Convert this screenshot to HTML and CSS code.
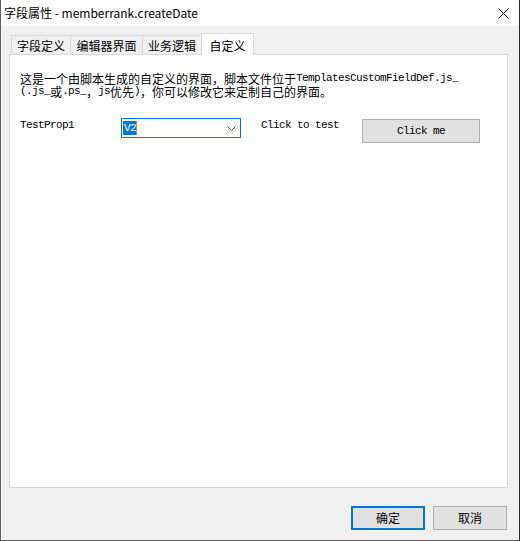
FILE: index.html
```html
<!DOCTYPE html>
<html>
<head>
<meta charset="utf-8">
<link rel="stylesheet" href="styles.css">
</head>
<body>
<div class="window">
  <div class="titlebar">
    <span class="title">字段属性 - memberrank.createDate</span>
    <svg class="close" width="11" height="11" viewBox="0 0 11 11"><path d="M0.5 0.5 L10.5 10.5 M10.5 0.5 L0.5 10.5" stroke="#000" stroke-width="1" fill="none"/></svg>
  </div>
  <div class="client">
    <div class="tabs">
      <div class="tab t1">字段定义</div>
      <div class="tab t2">编辑器界面</div>
      <div class="tab t3">业务逻辑</div>
      <div class="tab active">自定义</div>
    </div>
    <div class="panel">
      <div class="desc">
        <div class="line">这是一个由脚本生成的自定义的界面，脚本文件位于<span class="lat">TemplatesCustomFieldDef.js_</span></div>
        <div class="line"><span class="lat">(.js_</span>或<span class="lat">.ps_</span>，<span class="lat">js</span>优先<span class="lat">)</span>，你可以修改它来定制自己的界面。</div>
      </div>
      <div class="row">
        <span class="label lat">TestProp1</span>
        <div class="combo">
          <span class="sel lat">V2</span>
          <svg class="chev" width="9" height="5" viewBox="0 0 9 5"><path d="M0.5 0.5 L4.5 4.5 L8.5 0.5" stroke="#555" stroke-width="1" fill="none"/></svg>
        </div>
        <span class="label2 lat">Click to test</span>
        <div class="btn-click lat">Click me</div>
      </div>
    </div>
    <div class="footer">
      <div class="btn default">确定</div>
      <div class="btn">取消</div>
    </div>
  </div>
</div>
</body>
</html>
```
FILE: styles.css
```css
html, body {
  margin: 0;
  padding: 0;
  background: #f0f0f0;
}
.window {
  width: 520px;
  height: 541px;
  box-sizing: border-box;
  border-left: 1px solid #5d6366;
  border-right: 1px solid #2a2a2a;
  border-bottom: 1px solid #5d6366;
  background: #f0f0f0;
  display: flex;
  flex-direction: column;
  font-family: "Noto Sans CJK SC", "Liberation Sans", sans-serif;
  font-size: 12px;
  color: #000;
}
.titlebar {
  height: 26px;
  background: #fff;
  display: flex;
  align-items: center;
  justify-content: space-between;
  padding: 0 10px 0 3px;
}
.title {
  font-family: "Noto Sans CJK SC", sans-serif;
  font-size: 12px;
  line-height: 16px;
}
.close {
  display: block;
  margin-top: 1px;
}
.client {
  flex: 1;
  padding: 7px 0 0 8px;
  display: flex;
  flex-direction: column;
}
.tabs {
  display: flex;
  align-items: flex-end;
  padding-left: 2px;
}
.tab {
  box-sizing: border-box;
  height: 19px;
  border: 1px solid #d9d9d9;
  border-bottom: none;
  background: #f0f0f0;
  line-height: 19px;
  text-align: center;
  margin-left: -1px;
}
.tabs .t1 { margin-left: 0; width: 60px; }
.t2 { width: 73px; }
.t3 { width: 60px; }
.tab.active {
  width: 53px;
  height: 22px;
  line-height: 24px;
  background: #fff;
  margin-bottom: -1px;
  position: relative;
  z-index: 1;
}
.panel {
  width: 499px;
  height: 434px;
  box-sizing: border-box;
  background: #fff;
  border: 1px solid #d9d9d9;
  padding: 17px 10px 0 10px;
}
.desc {
  display: flex;
  flex-direction: column;
}
.line {
  height: 13px;
  line-height: 13px;
  white-space: nowrap;
  display: flex;
  align-items: center;
}
.lat {
  font-family: "Liberation Mono", monospace;
  font-size: 11px;
  letter-spacing: -0.6px;
}
.row {
  display: flex;
  align-items: flex-start;
  margin-top: 20px;
}
.label {
  width: 101px;
  height: 14px;
  line-height: 14px;
}
.combo {
  width: 120px;
  height: 20px;
  box-sizing: border-box;
  border: 1px solid #0078d7;
  display: flex;
  align-items: center;
  justify-content: space-between;
  padding: 0 4px 0 1px;
}
.sel {
  background: #0078d7;
  color: #fff;
  height: 14px;
  line-height: 14px;
  padding-left: 1px;
  border-right: 1px solid #e8841f;
}
.chev {
  display: block;
}
.label2 {
  margin-left: 20px;
  width: 101px;
  height: 14px;
  line-height: 14px;
}
.btn-click {
  width: 118px;
  height: 24px;
  box-sizing: border-box;
  margin-top: 1px;
  background: #e1e1e1;
  border: 1px solid #adadad;
  text-align: center;
  line-height: 22px;
}
.footer {
  display: flex;
  justify-content: flex-end;
  gap: 8px;
  margin-top: 18px;
  padding-right: 12px;
}
.btn {
  width: 74px;
  height: 24px;
  box-sizing: border-box;
  background: #e1e1e1;
  border: 1px solid #adadad;
  text-align: center;
  line-height: 22px;
  font-size: 12px;
}
.btn.default {
  border: 2px solid #0078d7;
  line-height: 20px;
}
```
